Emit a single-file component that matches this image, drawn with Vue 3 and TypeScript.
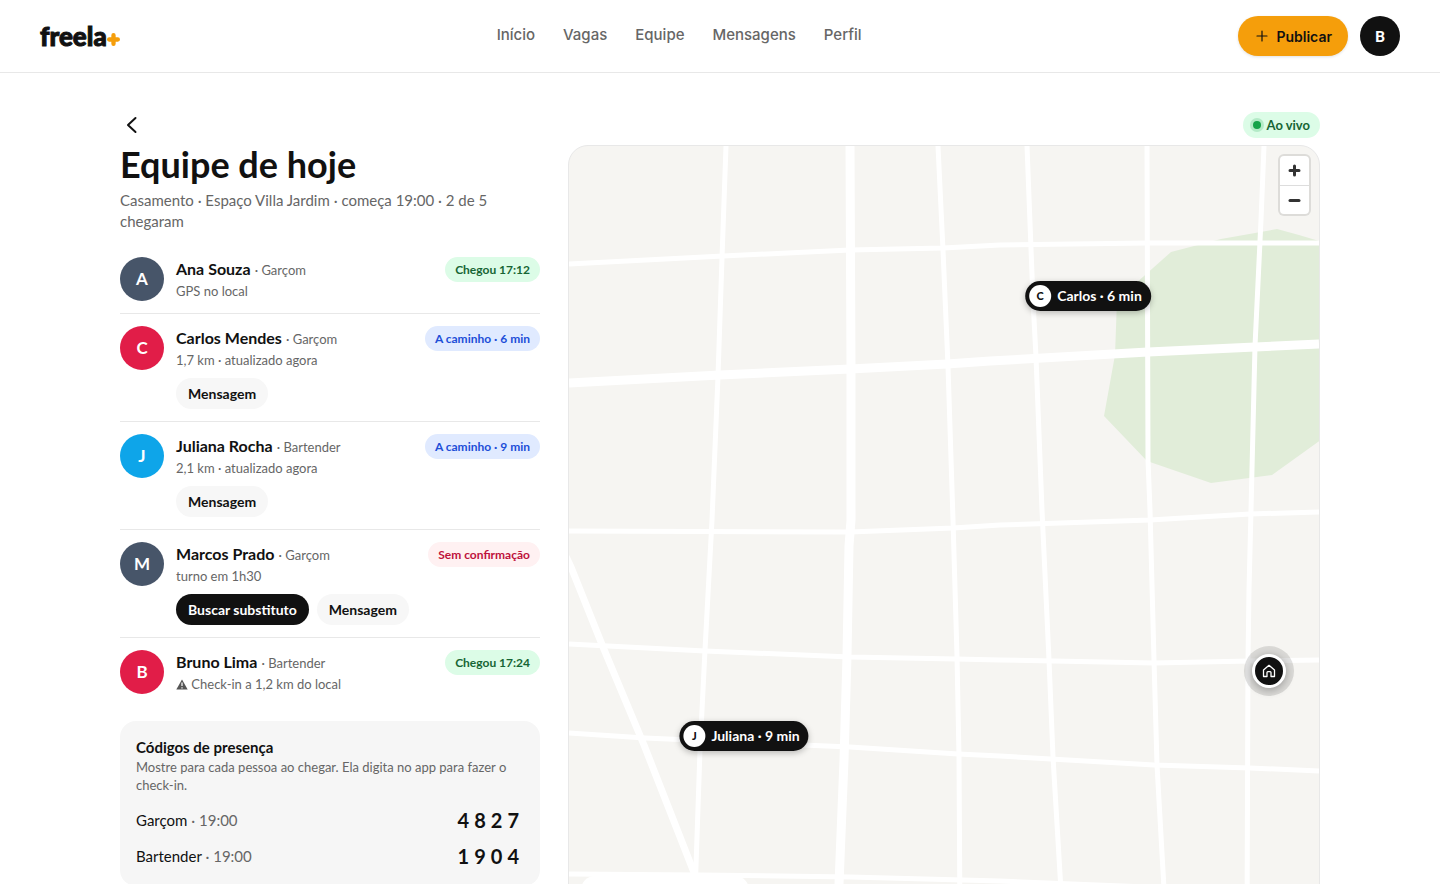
<script setup lang="ts">
import { ref } from 'vue'

type Tone = 'arrived' | 'moving' | 'missing'

interface Member {
  name: string
  role: string
  detail: string
  warning?: boolean
  color: string
  status: string
  tone: Tone
  canReplace?: boolean
  canMessage?: boolean
}

interface MapPin {
  name: string
  eta: string
  x: number
  y: number
}

const MAP_W = 750
const MAP_H = 778

const links = ['Início', 'Vagas', 'Equipe', 'Mensagens', 'Perfil']

const members = ref<Member[]>([
  { name: 'Ana Souza', role: 'Garçom', detail: 'GPS no local', color: '#475569', status: 'Chegou 17:12', tone: 'arrived' },
  { name: 'Carlos Mendes', role: 'Garçom', detail: '1,7 km · atualizado agora', color: '#e11d48', status: 'A caminho · 6 min', tone: 'moving', canMessage: true },
  { name: 'Juliana Rocha', role: 'Bartender', detail: '2,1 km · atualizado agora', color: '#0ea5e9', status: 'A caminho · 9 min', tone: 'moving', canMessage: true },
  { name: 'Marcos Prado', role: 'Garçom', detail: 'turno em 1h30', color: '#475569', status: 'Sem confirmação', tone: 'missing', canReplace: true, canMessage: true },
  { name: 'Bruno Lima', role: 'Bartender', detail: 'Check-in a 1,2 km do local', warning: true, color: '#e11d48', status: 'Chegou 17:24', tone: 'arrived' },
])

const codes = [
  { role: 'Garçom', time: '19:00', code: '4827' },
  { role: 'Bartender', time: '19:00', code: '1904' },
]

const pins: MapPin[] = [
  { name: 'Carlos', eta: '6 min', x: 519, y: 150 },
  { name: 'Juliana', eta: '9 min', x: 175, y: 590 },
]

const venue = { x: 700, y: 525 }

const streets = [
  'M157 0L153 112L149 230L143 374L136 504L131 604L125 778',
  'M369 0L374 104L379 220L384 374L388 510L390 610L391 778',
  'M458 0L464 154L467 211L473 364L480 514L484 611L494 778',
  'M578 0L579 314L581 364L585 514L588 619L597 778',
  'M695 0L692 74L686 200L682 364L680 444L679 514L678 778',
  'M0 118L154 110L281 104L374 102L431 99L579 97L750 97',
  'M0 385L281 386L384 382L431 379L581 374L681 368L750 366',
  'M0 498L136 505L281 511L387 513L431 514L585 517L681 515L750 514',
  'M0 587L76 592L281 601L389 608L431 610L585 619L681 622L750 625',
  'M0 728L131 729L281 731L431 735L750 748',
]

const avenues = [
  'M281 0L282 224L282 374L280 400L278 510L275 614L270 738L269 778',
  'M0 237L151 229L281 223L378 218L421 215L579 206L686 201L750 198',
]

function place(x: number, y: number) {
  return { left: `${(x / MAP_W) * 100}%`, top: `${(y / MAP_H) * 100}%` }
}
</script>

<template>
  <div class="page">
    <header class="topbar">
      <a class="logo" href="#" aria-label="freela+">
        <span>freela</span>
        <svg class="logo-plus" viewBox="0 0 12 12" aria-hidden="true"><path d="M6 2V10M2 6H10" /></svg>
      </a>
      <nav class="nav">
        <a v-for="l in links" :key="l" href="#">{{ l }}</a>
      </nav>
      <div class="actions">
        <button class="publish" type="button">
          <svg viewBox="0 0 12 12" aria-hidden="true"><path d="M6 1V11M1 6H11" /></svg>
          Publicar
        </button>
        <button class="me" type="button" aria-label="Conta">B</button>
      </div>
    </header>

    <main class="content">
      <div class="toolbar">
        <button class="back" type="button" aria-label="Voltar">
          <svg viewBox="0 0 24 24" aria-hidden="true"><path d="M15.500 5L8 12L15.500 19" /></svg>
        </button>
        <span class="live"><i></i>Ao vivo</span>
      </div>

      <div class="columns">
        <section class="side">
          <h1>Equipe de hoje</h1>
          <p class="summary">Casamento · Espaço Villa Jardim · começa 19:00 · 2 de 5 chegaram</p>

          <ul class="team">
            <li v-for="m in members" :key="m.name">
              <span class="avatar" :style="{ background: m.color }">{{ m.name[0] }}</span>
              <div class="info">
                <div class="who">
                  <span class="label"><strong>{{ m.name }}</strong> <small>· {{ m.role }}</small></span>
                  <span class="badge" :class="m.tone">{{ m.status }}</span>
                </div>
                <p class="detail">
                  <svg v-if="m.warning" viewBox="0 0 12 11" aria-hidden="true">
                    <path class="tri" d="M6 0.500L11.700 10.500H0.300Z" />
                    <path class="bang" d="M6 3.600V7M6 8.200V9.400" />
                  </svg>
                  {{ m.detail }}
                </p>
                <div v-if="m.canMessage || m.canReplace" class="buttons">
                  <button v-if="m.canReplace" class="chip dark" type="button">Buscar substituto</button>
                  <button v-if="m.canMessage" class="chip" type="button">Mensagem</button>
                </div>
              </div>
            </li>
          </ul>

          <section class="codes">
            <h2>Códigos de presença</h2>
            <p>Mostre para cada pessoa ao chegar. Ela digita no app para fazer o check-in.</p>
            <dl>
              <div v-for="c in codes" :key="c.role">
                <dt>{{ c.role }} <span>· {{ c.time }}</span></dt>
                <dd>{{ c.code }}</dd>
              </div>
            </dl>
          </section>
        </section>

        <section class="map" aria-label="Mapa da equipe">
          <svg class="tiles" :viewBox="`0 0 ${MAP_W} ${MAP_H}`" preserveAspectRatio="none" aria-hidden="true">
            <path class="park" d="M602 106L652 93L708 83L730 89L760 98V288L703 329L642 337L578 315L535 270L546 209L548 154Z" />
            <path v-for="d in streets" :key="d" class="street" :d="d" />
            <path class="diagonal" d="M-8 400L2 421L34 501L75 599L124 724L145 778" />
            <path v-for="d in avenues" :key="d" class="avenue" :d="d" />
          </svg>

          <div v-for="p in pins" :key="p.name" class="pin" :style="place(p.x, p.y)">
            <b>{{ p.name[0] }}</b>{{ p.name }} · {{ p.eta }}
          </div>
          <div class="venue" :style="place(venue.x, venue.y)">
            <svg viewBox="0 0 14 14" aria-hidden="true"><path d="M1.500 6L7 1.300L12.500 6V12.500H9V8.500Q9 7.600 8.100 7.600H5.900Q5 7.600 5 8.500V12.500H1.500Z" /></svg>
          </div>

          <div class="zoom">
            <button type="button" aria-label="Aproximar">
              <svg viewBox="0 0 29 29" aria-hidden="true"><path d="M14.500 10V19M10 14.500H19" /></svg>
            </button>
            <button type="button" aria-label="Afastar">
              <svg viewBox="0 0 29 29" aria-hidden="true"><path d="M10 14.500H19" /></svg>
            </button>
          </div>
          <div class="map-note"></div>
        </section>
      </div>
    </main>
  </div>
</template>

<style>
body {
  margin: 0;
  background: #fff;
}
</style>

<style scoped>
.page {
  min-height: 100vh;
  color: #111;
  font-family: Lato, 'Open Sans', sans-serif;
  font-size: 14px;
}
button {
  border: 0;
  padding: 0;
  font: inherit;
  color: inherit;
  cursor: pointer;
}
a {
  color: inherit;
  text-decoration: none;
}
h1, h2, p, ul, dl, dd {
  margin: 0;
  padding: 0;
}

.topbar {
  display: flex;
  align-items: center;
  justify-content: space-between;
  height: 72px;
  padding: 0 40px;
  border-bottom: 1px solid #e8e8e8;
}
.logo {
  display: flex;
  align-items: center;
  font-size: 26px;
  line-height: 30px;
  font-weight: 900;
  -webkit-text-stroke: 1px #111;
}
.logo-plus {
  width: 13px;
  height: 13px;
  margin-top: 6px;
  fill: none;
  stroke: #f59e0b;
  stroke-width: 4;
  stroke-linecap: round;
}
.nav {
  display: flex;
  gap: 28px;
  padding-bottom: 2px;
  font-family: Inter, sans-serif;
  font-size: 15px;
  line-height: 24px;
  font-weight: 500;
  color: #666;
}
.actions {
  display: flex;
  align-items: center;
  gap: 12px;
}
.publish {
  display: flex;
  align-items: center;
  gap: 8px;
  height: 40px;
  padding: 0 16px 0 18px;
  border-radius: 20px;
  background: #f59e0b;
  box-shadow: 0 1px 3px rgba(0, 0, 0, 0.12);
  font-family: Inter, sans-serif;
  font-size: 14px;
  font-weight: 600;
}
.publish svg {
  width: 12px;
  height: 12px;
  stroke: #111;
  stroke-width: 1.2;
  stroke-linecap: round;
}
.me {
  width: 40px;
  height: 40px;
  border-radius: 50%;
  background: #111;
  color: #fff;
  font-size: 15px;
  font-weight: 900;
}

.content {
  max-width: 1200px;
  margin: 0 auto;
  padding: 39px 40px 40px;
}
.toolbar {
  display: flex;
  align-items: center;
  justify-content: space-between;
  height: 26px;
  margin-bottom: 7px;
}
.back {
  width: 24px;
  height: 24px;
  background: none;
}
.back svg {
  display: block;
  fill: none;
  stroke: #111;
  stroke-width: 2;
  stroke-linecap: round;
  stroke-linejoin: round;
}
.live {
  display: flex;
  align-items: center;
  gap: 6px;
  height: 26px;
  padding: 0 10px;
  border-radius: 13px;
  background: #dcfce7;
  color: #166534;
  font-size: 13px;
  font-weight: 700;
}
.live i {
  width: 8px;
  height: 8px;
  border-radius: 50%;
  background: #16a34a;
  box-shadow: 0 0 0 3px rgba(22, 163, 74, 0.2);
}
.columns {
  display: grid;
  grid-template-columns: 420px minmax(0, 1fr);
  gap: 28px;
}

h1 {
  font-size: 36px;
  line-height: 38px;
  font-weight: 700;
}
.summary {
  margin-top: 7px;
  font-size: 15px;
  line-height: 21px;
  color: #666;
}
.team {
  margin-top: 13px;
  list-style: none;
}
.team li {
  display: flex;
  gap: 12px;
  padding: 12px 0;
}
.team li + li {
  border-top: 1px solid #e8e8e8;
}
.avatar {
  display: flex;
  align-items: center;
  justify-content: center;
  flex: none;
  width: 44px;
  height: 44px;
  border-radius: 50%;
  color: #fff;
  font-size: 17px;
  line-height: 20px;
  font-weight: 700;
}
.info {
  flex: 1;
  min-width: 0;
}
.who {
  display: flex;
  align-items: flex-start;
  justify-content: space-between;
  height: 25px;
  white-space: nowrap;
}
.label {
  font-size: 16px;
  line-height: 24px;
}
.who strong {
  font-weight: 700;
}
.who small {
  font-size: 13px;
  line-height: 20px;
  color: #666;
}
.badge {
  padding: 0 10px;
  border-radius: 13px;
  font-size: 12px;
  line-height: 25px;
  font-weight: 700;
}
.arrived {
  background: #dcfce7;
  color: #166534;
}
.moving {
  background: #e0eaff;
  color: #1d4ed8;
}
.missing {
  background: #fff1f2;
  color: #be123c;
}
.detail {
  font-size: 13px;
  line-height: 19px;
  color: #666;
}
.detail svg {
  width: 12px;
  height: 11px;
  vertical-align: -1px;
}
.tri {
  fill: #555;
}
.bang {
  stroke: #fff;
  stroke-width: 1.2;
}
.buttons {
  display: flex;
  gap: 8px;
  margin-top: 8px;
}
.chip {
  height: 31px;
  padding: 0 12px;
  border-radius: 16px;
  background: #f7f7f7;
  font-size: 14px;
  font-weight: 700;
}
.chip.dark {
  background: #111;
  color: #fff;
}

.codes {
  margin-top: 15px;
  padding: 16px 16px 12px;
  border-radius: 16px;
  background: #f6f6f6;
}
.codes h2 {
  font-size: 15px;
  line-height: 21px;
  font-weight: 700;
}
.codes p {
  margin-bottom: 8px;
  font-size: 13px;
  line-height: 18px;
  color: #666;
}
.codes dl > div {
  display: flex;
  align-items: center;
  justify-content: space-between;
  height: 36px;
}
.codes dt {
  font-size: 15px;
}
.codes dt span {
  color: #666;
}
.codes dd {
  font-size: 20px;
  font-weight: 700;
  letter-spacing: 5px;
}

.map {
  position: relative;
  height: 778px;
  overflow: hidden;
  border: 1px solid #e8e8e8;
  border-radius: 20px;
  background: #f6f5f2;
}
.tiles {
  display: block;
  width: 100%;
  height: 100%;
}
.park {
  fill: #e1edd9;
}
.street,
.diagonal,
.avenue {
  fill: none;
  stroke: #fff;
  stroke-linejoin: round;
}
.street {
  stroke-width: 5;
}
.diagonal {
  stroke-width: 7;
}
.avenue {
  stroke-width: 9;
}
.pin,
.venue {
  position: absolute;
  transform: translate(-50%, -50%);
  background: #111;
  color: #fff;
}
.pin {
  display: flex;
  align-items: center;
  height: 30px;
  padding: 0 9px 0 4px;
  border-radius: 15px;
  box-shadow: 0 2px 6px rgba(0, 0, 0, 0.25);
  font-size: 14px;
  font-weight: 700;
  white-space: nowrap;
}
.pin b {
  width: 22px;
  margin-right: 6px;
  border-radius: 50%;
  background: #fff;
  color: #111;
  font-size: 11px;
  line-height: 22px;
  text-align: center;
}
.venue {
  width: 28px;
  height: 28px;
  border: 3px solid #fff;
  border-radius: 50%;
  box-shadow: 0 0 0 8px rgba(17, 17, 17, 0.12), 0 2px 8px rgba(0, 0, 0, 0.3);
}
.venue svg {
  display: block;
  width: 14px;
  height: 14px;
  margin: 7px;
  fill: none;
  stroke: #fff;
  stroke-width: 1.3;
  stroke-linejoin: round;
}
.zoom {
  position: absolute;
  top: 10px;
  right: 10px;
  border-radius: 4px;
  background: #fff;
  box-shadow: 0 0 0 2px rgba(0, 0, 0, 0.1);
}
.zoom button {
  display: block;
  width: 29px;
  height: 29px;
  background: none;
}
.zoom button + button {
  border-top: 1px solid #ddd;
}
.zoom svg {
  display: block;
  width: 29px;
  height: 29px;
  stroke: #333;
  stroke-width: 3;
  stroke-linecap: round;
}
.map-note {
  position: absolute;
  left: 12px;
  bottom: 12px;
  width: 168px;
  height: 36px;
  border-radius: 14px;
  background: #fff;
}
</style>
